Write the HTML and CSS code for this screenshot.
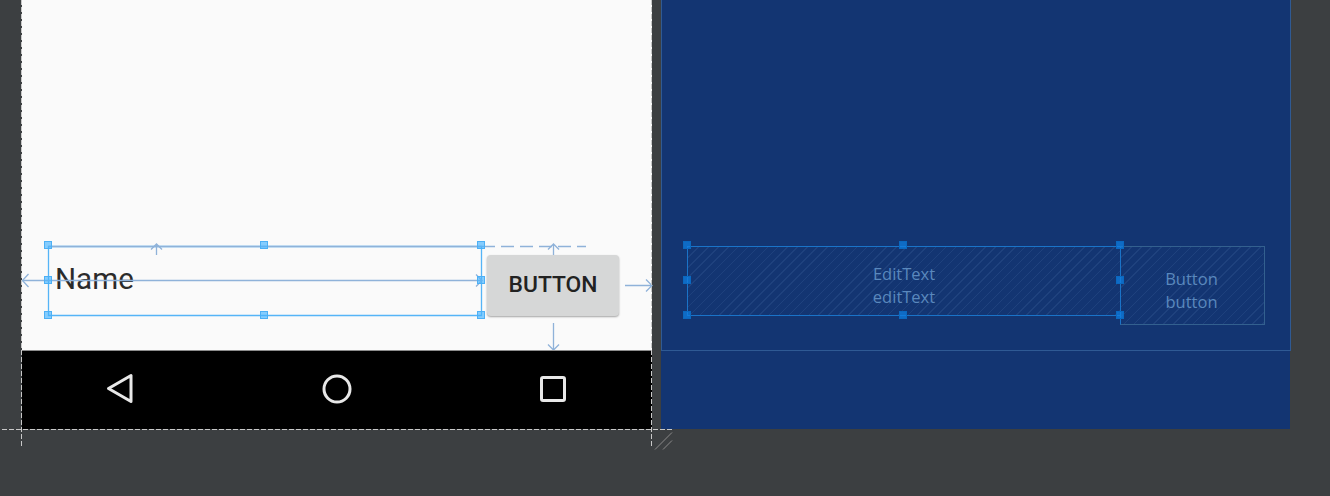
FILE: index.html
```html
<!DOCTYPE html>
<html lang="en">
<head>
  <meta charset="UTF-8" />
  <title>Layout editor</title>
  <link rel="stylesheet" href="styles.css">
</head>
<body>
  <main class="canvas">
    <section class="device">
      <div class="screen">
        <div class="edit-text">Name</div>
        <div class="button">BUTTON</div>

        <svg class="constraints" width="630" height="350" viewBox="0 0 630 350">
          <g class="sel">
            <path d="M26.500 246.500H459.500V315.500H26.500Z" />
          </g>
          <g class="line">
            <path d="M0 280.500H460" />
            <path d="M26.500 246.500H460" />
            <path d="M134.500 244V255M129 249.500l5.500-5.500 5.500 5.500" />
            <path d="M6.500 274l-6 6.500 6 6.500" />
            <path d="M454 274.500l6 6-6 6" />
            <path d="M531.500 255V244M526 249.500l5.500-5.500 5.500 5.500" />
            <path d="M531.500 323V350M526 344.500l5.500 5.500 5.500-5.500" />
            <path d="M603 285.500H630M624 279.500l6 6-6 6" />
            <path class="dashed" d="M460 246.500H564" />
          </g>
          <g class="handles">
            <rect x="22.500" y="241.500" width="7" height="7" />
            <rect x="238.500" y="241.500" width="7" height="7" />
            <rect x="455.500" y="241.500" width="7" height="7" />
            <rect x="22.500" y="276.500" width="7" height="7" />
            <rect x="455.500" y="276.500" width="7" height="7" />
            <rect x="22.500" y="311.500" width="7" height="7" />
            <rect x="238.500" y="311.500" width="7" height="7" />
            <rect x="455.500" y="311.500" width="7" height="7" />
          </g>
        </svg>
      </div>

      <div class="navbar">
        <svg width="24" height="32" viewBox="0 0 24 32" class="nav-back">
          <path d="M1.500 15.500L24 2.500V28.500Z" />
        </svg>
        <svg width="30" height="30" viewBox="0 0 30 30" class="nav-home">
          <circle cx="15" cy="15" r="13" />
        </svg>
        <svg width="28" height="28" viewBox="0 0 28 28" class="nav-recent">
          <rect x="2.500" y="2.500" width="23" height="23" rx="1.500" />
        </svg>
      </div>
    </section>

    <section class="blueprint">
      <div class="blue-screen">
        <div class="blue-edit">
          <span>EditText</span>
          <span>editText</span>
        </div>
        <div class="blue-button">
          <span>Button</span>
          <span>button</span>
        </div>
        <svg class="blue-handles" width="629" height="350" viewBox="0 0 629 350">
          <rect x="22.500" y="241.500" width="7" height="7" />
          <rect x="238.500" y="241.500" width="7" height="7" />
          <rect x="455.500" y="241.500" width="7" height="7" />
          <rect x="22.500" y="276.500" width="7" height="7" />
          <rect x="455.500" y="276.500" width="7" height="7" />
          <rect x="22.500" y="311.500" width="7" height="7" />
          <rect x="238.500" y="311.500" width="7" height="7" />
          <rect x="455.500" y="311.500" width="7" height="7" />
        </svg>
      </div>
    </section>

    <svg class="guides" width="700" height="450" viewBox="0 0 700 450">
      <path class="guide" d="M21.500 0V447M651.500 0V447M2 429.500H672" />
      <path class="grip" d="M655 449.500L672 432.500M663 449.500L672 440.500" />
    </svg>
  </main>
</body>
</html>
```
FILE: styles.css
```css
html, body {
  margin: 0;
  padding: 0;
  height: 100%;
  overflow: hidden;
}
body {
  background-color: #3c3f41;
}
.canvas {
  position: relative;
  display: flex;
  gap: 9px;
  padding-left: 22px;
  height: 496px;
}
.device {
  width: 630px;
  height: 429px;
  flex: none;
}
.screen {
  position: relative;
  height: 350px;
  background-color: #fafafa;
}
.edit-text {
  position: absolute;
  left: 33px;
  top: 261px;
  font-family: Roboto, sans-serif;
  font-size: 29.600px;
  line-height: 36px;
  color: #2b2b2b;
}
.button {
  position: absolute;
  left: 465px;
  top: 255px;
  width: 132px;
  height: 61px;
  padding-bottom: 2px;
  box-sizing: border-box;
  display: flex;
  align-items: center;
  justify-content: center;
  background-color: #d6d7d7;
  border-radius: 4px;
  box-shadow: 0 1px 2px rgba(0, 0, 0, 0.35);
  font-family: Roboto, sans-serif;
  font-weight: 500;
  font-size: 22.800px;
  color: #222;
}
.constraints {
  position: absolute;
  left: 0;
  top: 0;
  overflow: visible;
}
.line path {
  fill: none;
  stroke: #8fb2d9;
  stroke-width: 1.300;
}
.line .dashed {
  stroke-dasharray: 13 6;
}
.sel path {
  fill: none;
  stroke: #55b4f7;
  stroke-width: 1.300;
}
.handles rect {
  fill: rgba(70, 180, 255, 0.65);
  stroke: #4db0f5;
  stroke-width: 1;
}
.navbar {
  display: flex;
  align-items: center;
  height: 79px;
  background-color: #000;
  border-top: 1px solid #8c8c8c;
  box-sizing: border-box;
  position: relative;
}
.navbar svg {
  fill: none;
  stroke: #e8e8e8;
  stroke-width: 3;
  stroke-linejoin: round;
}
.nav-back {
  margin-left: 85px;
  margin-top: -2px;
  overflow: visible;
}
.nav-home {
  margin-left: 191px;
  margin-top: -2px;
}
.nav-recent {
  margin-left: 187px;
  margin-top: -2px;
}
.blueprint {
  width: 629px;
  height: 429px;
  flex: none;
  background-color: #133572;
}
.blue-screen {
  position: relative;
  height: 351px;
  box-sizing: border-box;
  border: 1px solid #2f5a94;
  border-top: none;
  width: 630px;
}
.blue-edit, .blue-button {
  position: absolute;
  box-sizing: border-box;
  padding-top: 8px;
  display: flex;
  flex-direction: column;
  align-items: center;
  justify-content: center;
  font-family: "Open Sans", sans-serif;
  font-size: 16.500px;
  line-height: 23px;
  color: #5a88bd;
  background-image: repeating-linear-gradient(135deg, rgba(90, 130, 185, 0.16) 0, rgba(90, 130, 185, 0.16) 1px, transparent 1px, transparent 7px);
}
.blue-edit {
  left: 25px;
  top: 246px;
  width: 434px;
  height: 70px;
  border: 1px solid #1a73c8;
}
.blue-button {
  left: 458px;
  top: 246px;
  width: 145px;
  height: 79px;
  padding-right: 2px;
  border: 1px solid #33608f;
  border-left-color: #1a73c8;
}
.blue-handles {
  position: absolute;
  left: -1px;
  top: 0;
  overflow: visible;
}
.blue-handles rect {
  fill: rgba(15, 125, 225, 0.75);
  stroke: #0a68c0;
  stroke-width: 1;
}
.guides {
  position: absolute;
  left: 0;
  top: 0;
  pointer-events: none;
}
.guide {
  fill: none;
  stroke: #c8c8c8;
  stroke-width: 1;
  stroke-dasharray: 5 2;
}
.grip {
  fill: none;
  stroke: #8a8a8a;
  stroke-width: 1;
}
```
